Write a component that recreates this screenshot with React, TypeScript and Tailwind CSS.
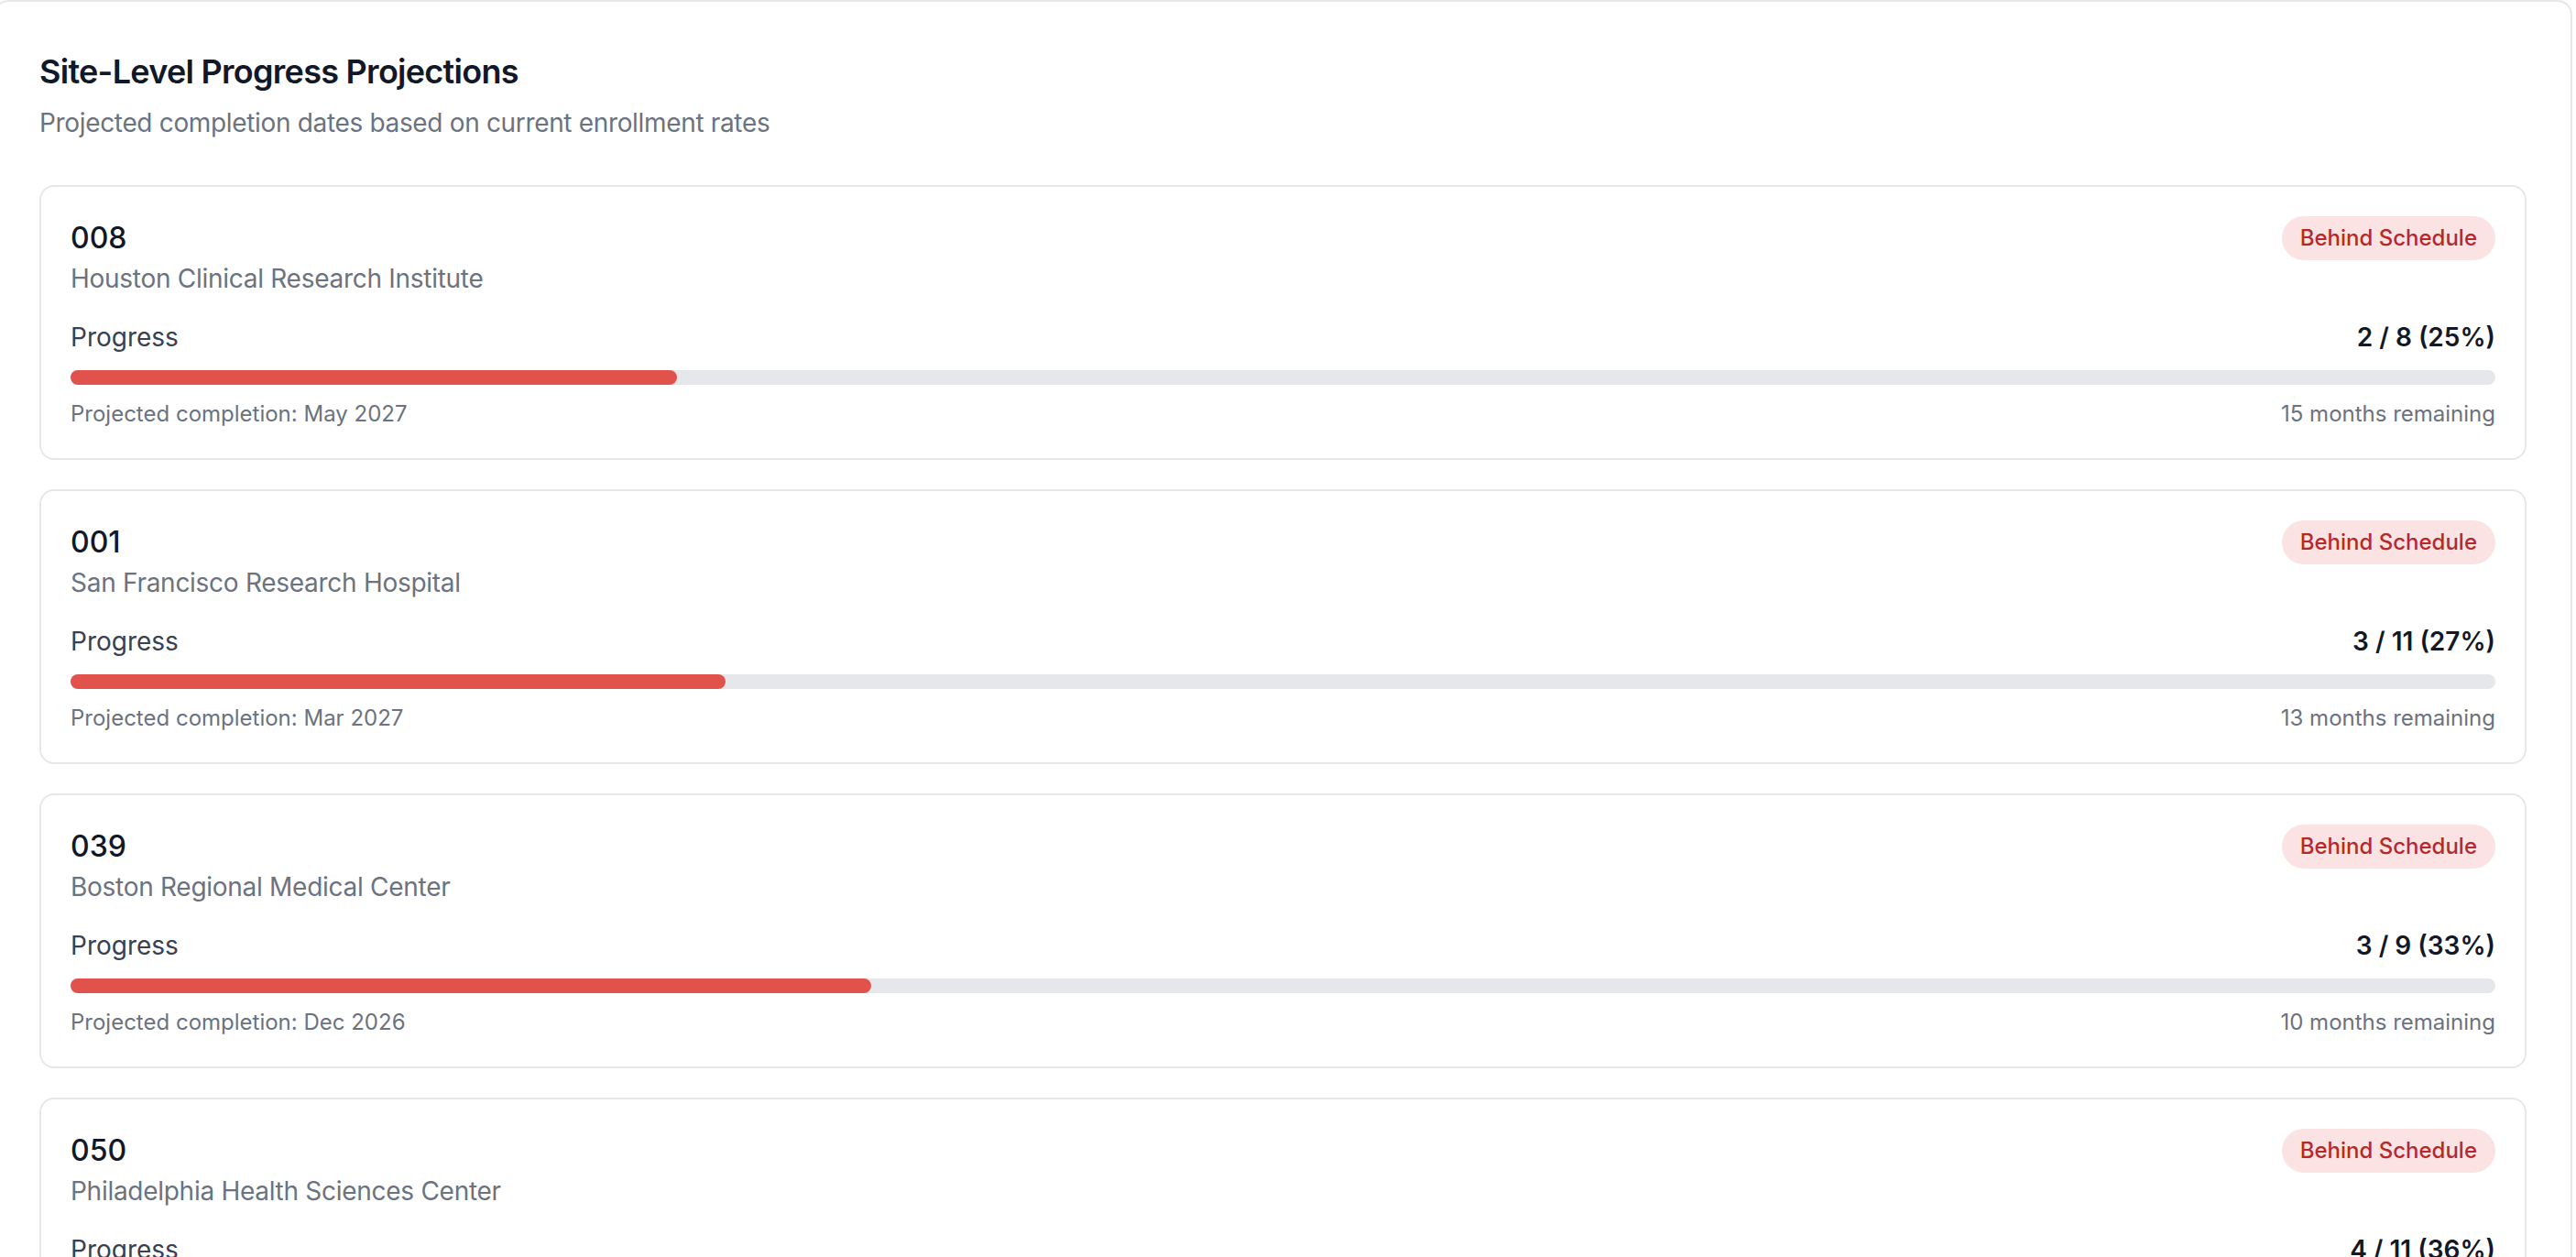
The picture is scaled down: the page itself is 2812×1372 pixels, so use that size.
const sites = [
  {
    id: "008",
    name: "Houston Clinical Research Institute",
    enrolled: 2,
    target: 8,
    pct: 25,
    projected: "May 2027",
    remaining: "15 months remaining",
  },
  {
    id: "001",
    name: "San Francisco Research Hospital",
    enrolled: 3,
    target: 11,
    pct: 27,
    projected: "Mar 2027",
    remaining: "13 months remaining",
  },
  {
    id: "039",
    name: "Boston Regional Medical Center",
    enrolled: 3,
    target: 9,
    pct: 33,
    projected: "Dec 2026",
    remaining: "10 months remaining",
  },
  {
    id: "050",
    name: "Philadelphia Health Sciences Center",
    enrolled: 4,
    target: 11,
    pct: 36,
    projected: "Nov 2026",
    remaining: "9 months remaining",
  },
];

type Site = (typeof sites)[number];

function SiteCard({ site }: { site: Site }) {
  return (
    <div className="rounded-[16px] border-2 border-[#e5e7eb] bg-white p-[32px]">
      <div className="flex items-start justify-between">
        <div>
          <div className="text-[32px] leading-[48px] font-medium text-[#111827]">{site.id}</div>
          <div className="text-[28px] leading-[40px] tracking-[-0.01em] text-[#6b7280]">{site.name}</div>
        </div>
        <span className="rounded-full bg-[#fbe3e3] px-[20px] py-[8px] text-[24px] leading-[32px] font-medium text-[#b42a2a]">
          Behind Schedule
        </span>
      </div>

      <div className="mt-[24px] flex items-center justify-between text-[28px] leading-[40px]">
        <span className="text-[#374151]">Progress</span>
        <span className="font-semibold text-[#111827]">
          {site.enrolled} / {site.target} ({site.pct}%)
        </span>
      </div>

      <div className="mt-[16px] h-[16px] w-full rounded-full bg-[#e5e7eb]">
        <div className="h-full rounded-full bg-[#e0524b]" style={{ width: `${site.pct}%` }} />
      </div>

      <div className="mt-[16px] flex items-center justify-between text-[24px] leading-[32px] text-[#6b7280]">
        <span>Projected completion: {site.projected}</span>
        <span>{site.remaining}</span>
      </div>
    </div>
  );
}

export default function App() {
  return (
    <div className="h-screen overflow-hidden bg-white font-['Inter','Noto_Sans',sans-serif] antialiased">
      <div className="-ml-[7px] w-[2815px] rounded-[16px] border-2 border-[#e5e7eb] bg-white p-[48px]">
        <h2 className="text-[36px] leading-[56px] font-semibold tracking-[-0.02em] text-[#111827]">
          Site-Level Progress Projections
        </h2>
        <p className="mt-[8px] text-[28px] leading-[40px] tracking-[-0.012em] text-[#6b7280]">
          Projected completion dates based on current enrollment rates
        </p>

        <div className="mt-[48px] flex flex-col gap-[32px]">
          {sites.map((site) => (
            <SiteCard key={site.id} site={site} />
          ))}
        </div>
      </div>
    </div>
  );
}
